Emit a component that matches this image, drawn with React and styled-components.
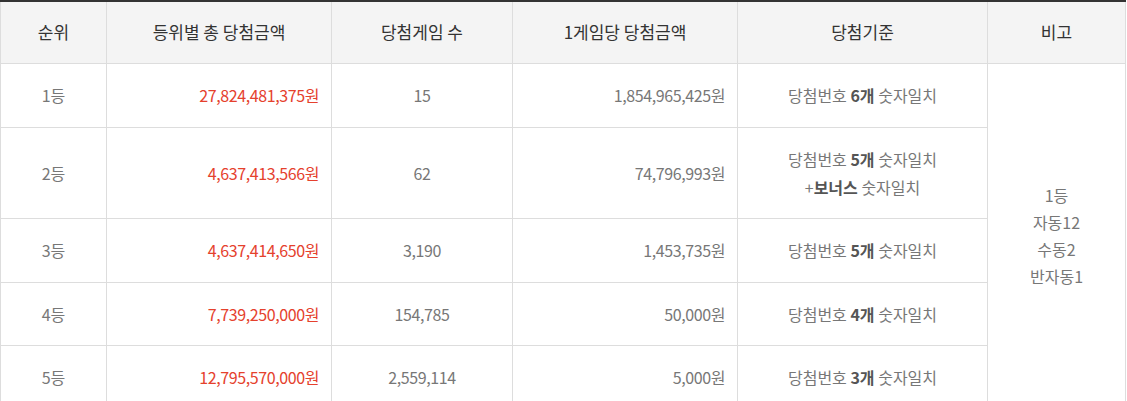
import React from "react";
import styled, { createGlobalStyle } from "styled-components";

const Global = createGlobalStyle`
  html, body { margin: 0; padding: 0; background: #fff; }
  body { font-family: "Noto Sans CJK KR", "Noto Sans", sans-serif; }
`;

const Table = styled.table`
  width: 1125px;
  border-collapse: collapse;
  table-layout: fixed;
  border-top: 2px solid #333;
  font-family: "Noto Sans CJK KR", "Noto Sans", sans-serif;
`;

const HeadCell = styled.th`
  background: #f4f4f4;
  color: #333;
  font-size: 17px;
  font-weight: 400;
  line-height: 28px;
  padding: 16px 12px 17px;
  border: 1px solid #ddd;
  border-top: none;
  text-align: center;
`;

const Cell = styled.td`
  color: #777;
  font-size: 16px;
  line-height: 28px;
  padding: 17.25px 12px 17.25px;
  border: 1px solid #ddd;
  text-align: ${(p) => p.$align || "center"};
  vertical-align: middle;
`;

const NoteCell = styled(Cell)`
  line-height: 27px;
`;

const Money = styled.span`
  color: ${(p) => (p.$red ? "#e5412d" : "#777")};
  letter-spacing: -0.4px;
`;

const Strong = styled.b`
  color: #555;
  font-weight: 700;
`;

const cols = [106, 225, 181, 225, 250, 138];

const rows = [
  { rank: "1등", total: "27,824,481,375원", count: "15", per: "1,854,965,425원", crit: <>당첨번호 <Strong>6개</Strong> 숫자일치</> },
  { rank: "2등", total: "4,637,413,566원", count: "62", per: "74,796,993원", crit: <>당첨번호 <Strong>5개</Strong> 숫자일치<br />+<Strong>보너스</Strong> 숫자일치</> },
  { rank: "3등", total: "4,637,414,650원", count: "3,190", per: "1,453,735원", crit: <>당첨번호 <Strong>5개</Strong> 숫자일치</> },
  { rank: "4등", total: "7,739,250,000원", count: "154,785", per: "50,000원", crit: <>당첨번호 <Strong>4개</Strong> 숫자일치</> },
  { rank: "5등", total: "12,795,570,000원", count: "2,559,114", per: "5,000원", crit: <>당첨번호 <Strong>3개</Strong> 숫자일치</> },
];

export default function App() {
  return (
    <>
      <Global />
      <Table>
        <colgroup>
          {cols.map((w, i) => (
            <col key={i} style={{ width: w }} />
          ))}
        </colgroup>
        <thead>
          <tr>
            <HeadCell>순위</HeadCell>
            <HeadCell>등위별 총 당첨금액</HeadCell>
            <HeadCell>당첨게임 수</HeadCell>
            <HeadCell>1게임당 당첨금액</HeadCell>
            <HeadCell>당첨기준</HeadCell>
            <HeadCell>비고</HeadCell>
          </tr>
        </thead>
        <tbody>
          {rows.map((r, i) => (
            <tr key={r.rank}>
              <Cell>{r.rank}</Cell>
              <Cell $align="right"><Money $red>{r.total}</Money></Cell>
              <Cell><Money>{r.count}</Money></Cell>
              <Cell $align="right"><Money>{r.per}</Money></Cell>
              <Cell>{r.crit}</Cell>
              {i === 0 && (
                <NoteCell rowSpan={5}>
                  1등<br />자동12<br />수동2<br />반자동1
                </NoteCell>
              )}
            </tr>
          ))}
        </tbody>
      </Table>
    </>
  );
}
